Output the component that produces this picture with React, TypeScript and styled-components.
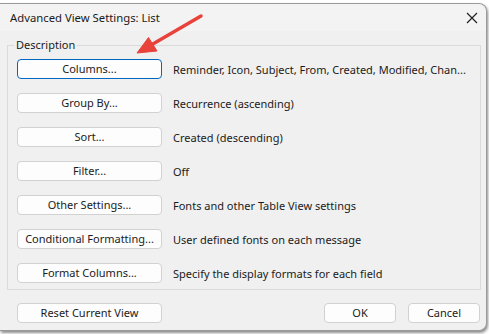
import React from "react";
import styled, { createGlobalStyle } from "styled-components";

const Global = createGlobalStyle`
  html, body { margin: 0; padding: 0; }
  body {
    background: #ffffff;
    font-family: "Noto Sans", "Segoe UI", sans-serif;
    width: 489px;
    height: 334px;
    overflow: hidden;
  }
`;

const Page = styled.div`
  position: relative;
  width: 489px;
  height: 334px;
  padding-top: 3px;
  box-sizing: border-box;
  background: #ffffff;
`;

const Dialog = styled.div`
  width: 487px;
  height: 328px;
  box-sizing: border-box;
  background: #f0f0f0;
  border: 1px solid #9a9a9a;
  border-left: none;
  border-radius: 0 8px 8px 0;
  display: flex;
  flex-direction: column;
  box-shadow: 1px 2px 3px rgba(0, 0, 0, 0.45);
  color: #000;
  font-size: 11px;
`;

const TitleBar = styled.div`
  height: 27px;
  display: flex;
  align-items: center;
  justify-content: space-between;
  padding: 0 8px 0 10px;
  background: #f3f3f3;
  border-radius: 0 8px 0 0;
`;

const Title = styled.span`
  font-size: 11.3px;
  color: #1b1b1b;
`;

const Close = styled.svg`
  width: 12px;
  height: 12px;
`;

const Body = styled.div`
  flex: 1;
  display: flex;
  flex-direction: column;
  padding: 6px 5px 0 7px;
`;

const GroupBox = styled.fieldset`
  margin: 0;
  padding: 6px 8px 6px 9px;
  border: 1px solid #dadada;
  display: flex;
  flex-direction: column;
  gap: 14px;
  min-width: 0;
`;

const Legend = styled.legend`
  padding: 0 2px;
  margin-left: -3px;
  font-size: 11px;
  line-height: 16px;
  color: #1b1b1b;
`;

const Row = styled.div`
  display: flex;
  align-items: center;
  gap: 11px;
`;

const Button = styled.button<{ $focused?: boolean; $width?: number }>`
  width: ${(p) => p.$width ?? 145}px;
  height: 20px;
  flex: none;
  box-sizing: border-box;
  background: #fdfdfd;
  border: 1px solid ${(p) => (p.$focused ? "#0067c0" : "#d1d1d1")};
  border-radius: 4px;
  font-family: "Noto Sans", "Segoe UI", sans-serif;
  font-size: 11px;
  line-height: 16px;
  color: #1b1b1b;
  padding: 0;
  display: flex;
  align-items: center;
  justify-content: center;
  white-space: nowrap;
`;

const Desc = styled.span`
  font-size: 11px;
  color: #1b1b1b;
  white-space: nowrap;
`;

const Footer = styled.div`
  display: flex;
  align-items: center;
  padding: 13px 0 0 10px;
`;

const Spacer = styled.div`
  flex: 1;
`;

const FooterRight = styled.div`
  display: flex;
  gap: 12px;
  padding-right: 1px;
`;

const Arrow = styled.svg`
  position: absolute;
  left: 0;
  top: 0;
  width: 489px;
  height: 334px;
  pointer-events: none;
`;

const rows: { label: string; desc: string; focused?: boolean }[] = [
  { label: "Columns...", desc: "Reminder, Icon, Subject, From, Created, Modified, Chan...", focused: true },
  { label: "Group By...", desc: "Recurrence (ascending)" },
  { label: "Sort...", desc: "Created (descending)" },
  { label: "Filter...", desc: "Off" },
  { label: "Other Settings...", desc: "Fonts and other Table View settings" },
  { label: "Conditional Formatting...", desc: "User defined fonts on each message" },
  { label: "Format Columns...", desc: "Specify the display formats for each field" },
];

export default function App() {
  return (
    <Page>
      <Global />
      <Dialog>
        <TitleBar>
          <Title>Advanced View Settings: List</Title>
          <Close viewBox="0 0 12 12">
            <path d="M1 1 L11 11 M11 1 L1 11" stroke="#1b1b1b" strokeWidth="1.1" fill="none" />
          </Close>
        </TitleBar>
        <Body>
          <GroupBox>
            <Legend>Description</Legend>
            {rows.map((r) => (
              <Row key={r.label}>
                <Button $focused={r.focused}>{r.label}</Button>
                <Desc>{r.desc}</Desc>
              </Row>
            ))}
          </GroupBox>
          <Footer>
            <Button>Reset Current View</Button>
            <Spacer />
            <FooterRight>
              <Button $width={72}>OK</Button>
              <Button $width={72}>Cancel</Button>
            </FooterRight>
          </Footer>
        </Body>
      </Dialog>
      <Arrow viewBox="0 0 489 334">
        <line x1="201" y1="16" x2="152" y2="44.5" stroke="#e8423b" strokeWidth="3.5" strokeLinecap="round" />
        <polygon points="137,53 148.5,37.5 157,51" fill="#e8423b" stroke="#e8423b" strokeWidth="1" strokeLinejoin="round" />
      </Arrow>
    </Page>
  );
}
